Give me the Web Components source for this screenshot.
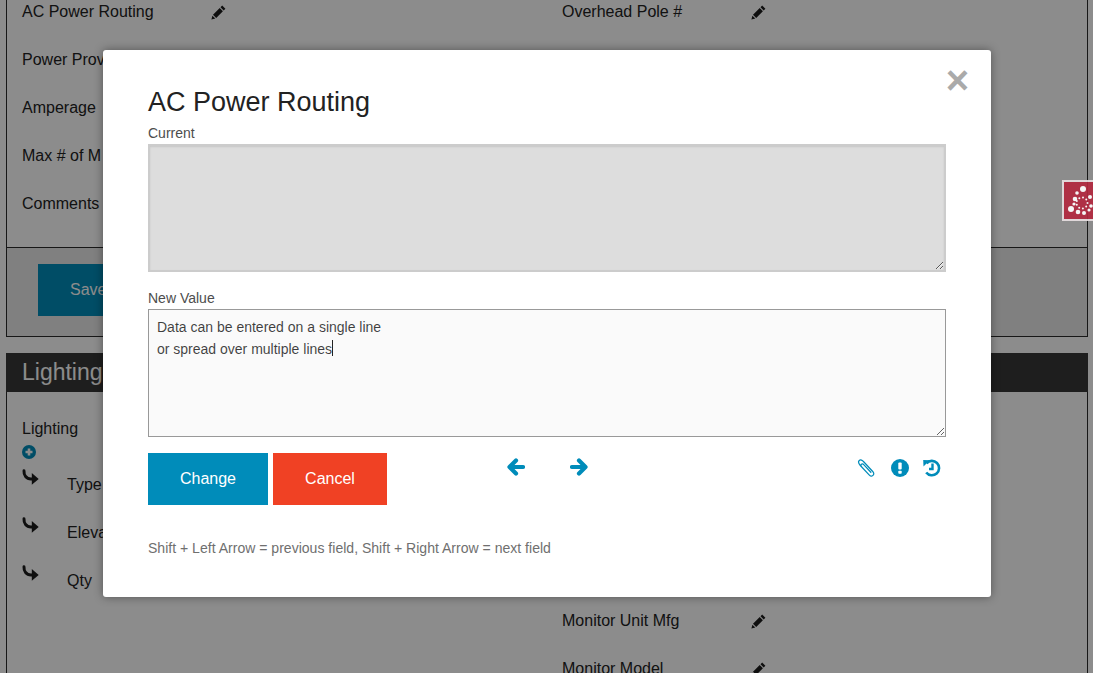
<!DOCTYPE html>
<html>
<head>
<meta charset="utf-8">
<title>AC Power Routing</title>
<style>
html, body { margin: 0; height: 100%; overflow: hidden; background: #fff; }
body { font-family: "Liberation Sans", Arial, sans-serif; color: #222; }
</style>
</head>
<body>
<template id="pencil-tpl">
  <style>:host{display:inline-block;width:15px;height:15px;line-height:0} svg{width:15px;height:15px;display:block}</style>
  <svg viewBox="0 0 15 15"><path fill="#1c1c1c" d="M11.200.6l3.200 3.200-1.700 1.700-3.200-3.200zM8.700 3.100l3.200 3.200-6.700 6.700-3.200-3.200zM1.400 10.700l2.900 2.900-3.900 1z"/></svg>
</template>

<script>
class PencilIcon extends HTMLElement{
    constructor(){
        super();
        this.attachShadow({mode:"open"}).appendChild(document.getElementById("pencil-tpl").content.cloneNode(true));
    }
}
customElements.define("pencil-icon", PencilIcon);

class FieldRow extends HTMLElement{
    constructor(){
        super();
        this.shadowDOM = this.attachShadow({mode:"open"});
    }
    connectedCallback(){
        this.shadowDOM.innerHTML = `
        <style>
        :host{display:flex;align-items:center;height:48px;font-size:16px;line-height:22px;color:#222}
        .label{width:189px;flex:none;white-space:nowrap}
        </style>
        <span class="label"><slot></slot></span>
        ${this.hasAttribute("edit") ? "<pencil-icon></pencil-icon>" : ""}
        `;
    }
}
customElements.define("field-row", FieldRow);

class SubRow extends HTMLElement{
    constructor(){
        super();
        this.attachShadow({mode:"open"}).innerHTML = `
        <style>
        :host{display:flex;height:48px;font-size:16px;line-height:22px;color:#222}
        svg{width:17px;height:16px;margin-right:28px;flex:none}
        .label{padding-top:5px;white-space:nowrap}
        </style>
        <svg viewBox="0 0 17 16"><path fill="none" stroke="#1c1c1c" stroke-width="3" stroke-linecap="round" d="M2 1.800c-.3 4.400 2.300 8.200 7 8.200h2"/><path fill="#1c1c1c" d="M9.800 4l6.900 6-6.900 5.800z"/></svg>
        <span class="label"><slot></slot></span>
        `;
    }
}
customElements.define("sub-row", SubRow);

class FormSection extends HTMLElement{
    constructor(){
        super();
        this.attachShadow({mode:"open"}).innerHTML = `
        <style>
        :host{display:block;margin:0 5px 0 6px;border:1px solid #2a2a2a;border-top:0;box-sizing:border-box}
        .cols{display:grid;grid-template-columns:540px 1fr;padding:0 15px}
        </style>
        <slot name="head"></slot>
        <div class="cols">
          <div><slot name="left"></slot></div>
          <div><slot name="right"></slot></div>
        </div>
        <slot name="foot"></slot>
        `;
    }
}
customElements.define("form-section", FormSection);

class SectionHead extends HTMLElement{
    constructor(){
        super();
        this.attachShadow({mode:"open"}).innerHTML = `
        <style>
        :host{display:block;margin:0 -1px;height:39px;background:#383838;color:#fff;font-size:23px;line-height:39px;padding-left:16px}
        </style>
        <slot></slot>
        `;
    }
}
customElements.define("section-head", SectionHead);

class SaveBar extends HTMLElement{
    constructor(){
        super();
        this.attachShadow({mode:"open"}).innerHTML = `
        <style>
        :host{display:block;border-top:1px solid #2a2a2a;background:#e9e9e9;height:89px;padding:16px 31px;box-sizing:border-box}
        .btn{display:inline-block;background:#008cba;color:#fff;font-size:16px;line-height:52px;height:52px;padding:0 32px}
        </style>
        <span class="btn"><slot></slot></span>
        `;
    }
}
customElements.define("save-bar", SaveBar);

class PlusIcon extends HTMLElement{
    constructor(){
        super();
        this.attachShadow({mode:"open"}).innerHTML = `
        <style>:host{display:block;width:14px;height:14px} svg{display:block}</style>
        <svg width="14" height="14" viewBox="0 0 14 14"><circle cx="7" cy="7" r="7" fill="#008cba"/><path d="M7 3.500v7M3.500 7h7" stroke="#fff" stroke-width="2.600"/></svg>
        `;
    }
}
customElements.define("plus-icon", PlusIcon);

class BadgeLogo extends HTMLElement{
    constructor(){
        super();
        // dots of the spiral, in px from the box corner: x, y, radius
        const big = [[21,9,3],[9,29,3],[13,19,2.300],[16,32,2.300],[22,33,2],[12,24,1.600],[28,17,2],[29,26,1.800],[27,30,1.600],[15,13,1.800]];
        let dots = big.map(d => `<circle cx="${d[0]}" cy="${d[1]}" r="${d[2]}"/>`).join("");
        for(let i = 0; i < 9; i++){
            const a = i * 0.7;
            dots += `<circle cx="${(20 + 5.500 * Math.cos(a)).toFixed(1)}" cy="${(23 + 5.500 * Math.sin(a)).toFixed(1)}" r="1"/>`;
        }
        this.attachShadow({mode:"open"}).innerHTML = `
        <style>
        :host{position:absolute;left:1062px;top:180px;width:41px;height:41px;box-sizing:border-box;background:#b3293f;opacity:.92}
        svg{display:block}
        .edge{position:absolute;inset:0;border:2px solid #e8dfe1}
        </style>
        <svg width="41" height="41" viewBox="0 0 41 41" fill="#fff">${dots}</svg>
        <div class="edge"></div>
        `;
    }
}
customElements.define("badge-logo", BadgeLogo);

class NavIcons extends HTMLElement{
    constructor(){
        super();
        this.attachShadow({mode:"open"}).innerHTML = `
        <style>
        :host{display:contents}
        svg{display:block;flex:none}
        .arrows{display:flex;gap:45px;margin-left:120px;margin-top:5px;align-self:flex-start}
        .tools{display:flex;gap:14px;margin-left:auto;margin-right:5px;margin-top:6px;align-self:flex-start}
        .clip{margin-right:2px}
        </style>
        <div class="arrows">
          <svg width="18" height="18" viewBox="0 0 18 18" fill="none" stroke="#008cba" stroke-width="4.200" stroke-linecap="round" stroke-linejoin="round"><path d="M16 9H3M9 2.500L2.500 9 9 15.500"/></svg>
          <svg width="18" height="18" viewBox="0 0 18 18" fill="none" stroke="#008cba" stroke-width="4.200" stroke-linecap="round" stroke-linejoin="round"><path d="M2 9h13M9 2.500L15.500 9 9 15.500"/></svg>
        </div>
        <div class="tools">
          <svg class="clip" width="18" height="18" viewBox="0 0 19 19" fill="none" stroke="#008cba" stroke-width="1.300" stroke-linecap="round" stroke-linejoin="round"><path d="M11.500 15.500L3.500 7C1.800 5 .6 3.400 2.200 1.800S5.600 1.400 7.300 3.200l9.300 10c1.400 1.500 1.400 3 .2 4.100s-2.700 1-4-.5L5.200 8.600C4.200 7.500 3.700 6.400 4.600 5.600s2-.3 3 .8l7 7.600"/></svg>
          <svg width="18" height="18" viewBox="0 0 18 18"><circle cx="9" cy="9" r="9" fill="#008cba"/><rect x="7.300" y="3.500" width="3.400" height="7" rx="1" fill="#fff"/><rect x="7.300" y="11.700" width="3.400" height="3" rx=".8" fill="#fff"/></svg>
          <svg width="18" height="18" viewBox="0 0 18 18" fill="none" stroke="#008cba" stroke-width="2.600"><path d="M3.500 4.300A7.200 7.200 0 1 1 3.200 13.500"/><path d="M9.500 4.500v5.500H6" stroke-width="2.400"/><path d="M.2 1l6.600.3-6.300 6.300z" fill="#008cba" stroke="none"/></svg>
        </div>
        `;
    }
}
customElements.define("nav-icons", NavIcons);

class EditModal extends HTMLElement{
    constructor(){
        super();
        this.attachShadow({mode:"open"}).innerHTML = `
        <style>
        :host{position:absolute;left:103px;top:50px;width:888px;height:547px;box-sizing:border-box;padding:36px 45px 0;background:#fff;border-radius:3px;box-shadow:0 0 10px rgba(0,0,0,.4);color:#222;display:block}
        .close{position:absolute;right:22px;top:6px;font-size:40px;line-height:48px;font-weight:bold;color:#aaa}
        h2{margin:0;font-size:27px;line-height:32px;font-weight:normal;color:#222}
        label{display:block;font-size:14px;line-height:20px;color:#4d4d4d}
        h2 + label{margin-top:5px}
        textarea{display:block;box-sizing:border-box;width:100%;height:128px;margin:0 0 16px;padding:6px 8px;font:14px/22px "Liberation Sans",Arial,sans-serif;color:rgba(0,0,0,.75);outline:none;border-radius:0}
        .cur{background:#ddd;border:2px solid #ccc;margin-top:1px;box-shadow:inset 0 1px 2px rgba(0,0,0,.1);margin-bottom:16px}
        .new{background:#fafafa;border:1px solid #999;margin-top:1px}
        .caret{position:absolute;left:229px;top:290px;width:1px;height:16px;background:#222}
        .actions{display:flex;align-items:flex-start;height:52px}
        .btn{height:52px;line-height:52px;font-size:16px;color:#fff;text-align:center}
        .change{width:120px;background:#008cba}
        .cancel{width:114px;background:#f04124;margin-left:5px}
        .hint{margin:33px 0 0;font-size:14.050px;line-height:20px;color:#6f6f6f}
        </style>
        <span class="close">&#215;</span>
        <h2><slot name="title"></slot></h2>
        <label>Current</label>
        <textarea class="cur" disabled></textarea>
        <label>New Value</label>
        <textarea class="new">Data can be entered on a single line
or spread over multiple lines</textarea>
        <div class="caret"></div>
        <div class="actions">
          <div class="btn change">Change</div>
          <div class="btn cancel">Cancel</div>
          <nav-icons></nav-icons>
        </div>
        <p class="hint">Shift + Left Arrow = previous field, Shift + Right Arrow = next field</p>
        `;
    }
}
customElements.define("edit-modal", EditModal);

class AppPage extends HTMLElement{
    constructor(){
        super();
        this.attachShadow({mode:"open"}).innerHTML = `
        <style>
        :host{display:block;position:relative;height:673px;overflow:hidden}
        .sheet{margin-top:-12px}
        .overlay{position:absolute;inset:0;background:rgba(0,0,0,.45)}
        </style>
        <div class="sheet"><slot></slot></div>
        <div class="overlay"></div>
        <slot name="top"></slot>
        `;
    }
}
customElements.define("app-page", AppPage);
</script>

<app-page>
  <form-section style="margin-bottom:16px">
    <field-row slot="left" edit>AC Power Routing</field-row>
    <field-row slot="left">Power Prov</field-row>
    <field-row slot="left">Amperage</field-row>
    <field-row slot="left">Max # of M</field-row>
    <field-row slot="left">Comments</field-row>
    <div slot="left" style="height:19px"></div>
    <field-row slot="right" edit>Overhead Pole #</field-row>
    <save-bar slot="foot">Save</save-bar>
  </form-section>
  <form-section>
    <section-head slot="head">Lighting</section-head>
    <div slot="left" style="padding-top:26px;font-size:16px;line-height:22px;height:51px">Lighting<plus-icon style="margin-top:5px"></plus-icon></div>
    <sub-row slot="left">Type</sub-row>
    <sub-row slot="left">Eleva</sub-row>
    <sub-row slot="left">Qty</sub-row>
    <div slot="right" style="height:205px"></div>
    <field-row slot="right" edit>Monitor Unit Mfg</field-row>
    <field-row slot="right" edit>Monitor Model</field-row>
  </form-section>
  <badge-logo slot="top"></badge-logo>
  <edit-modal slot="top"><span slot="title">AC Power Routing</span></edit-modal>
</app-page>
</body>
</html>
